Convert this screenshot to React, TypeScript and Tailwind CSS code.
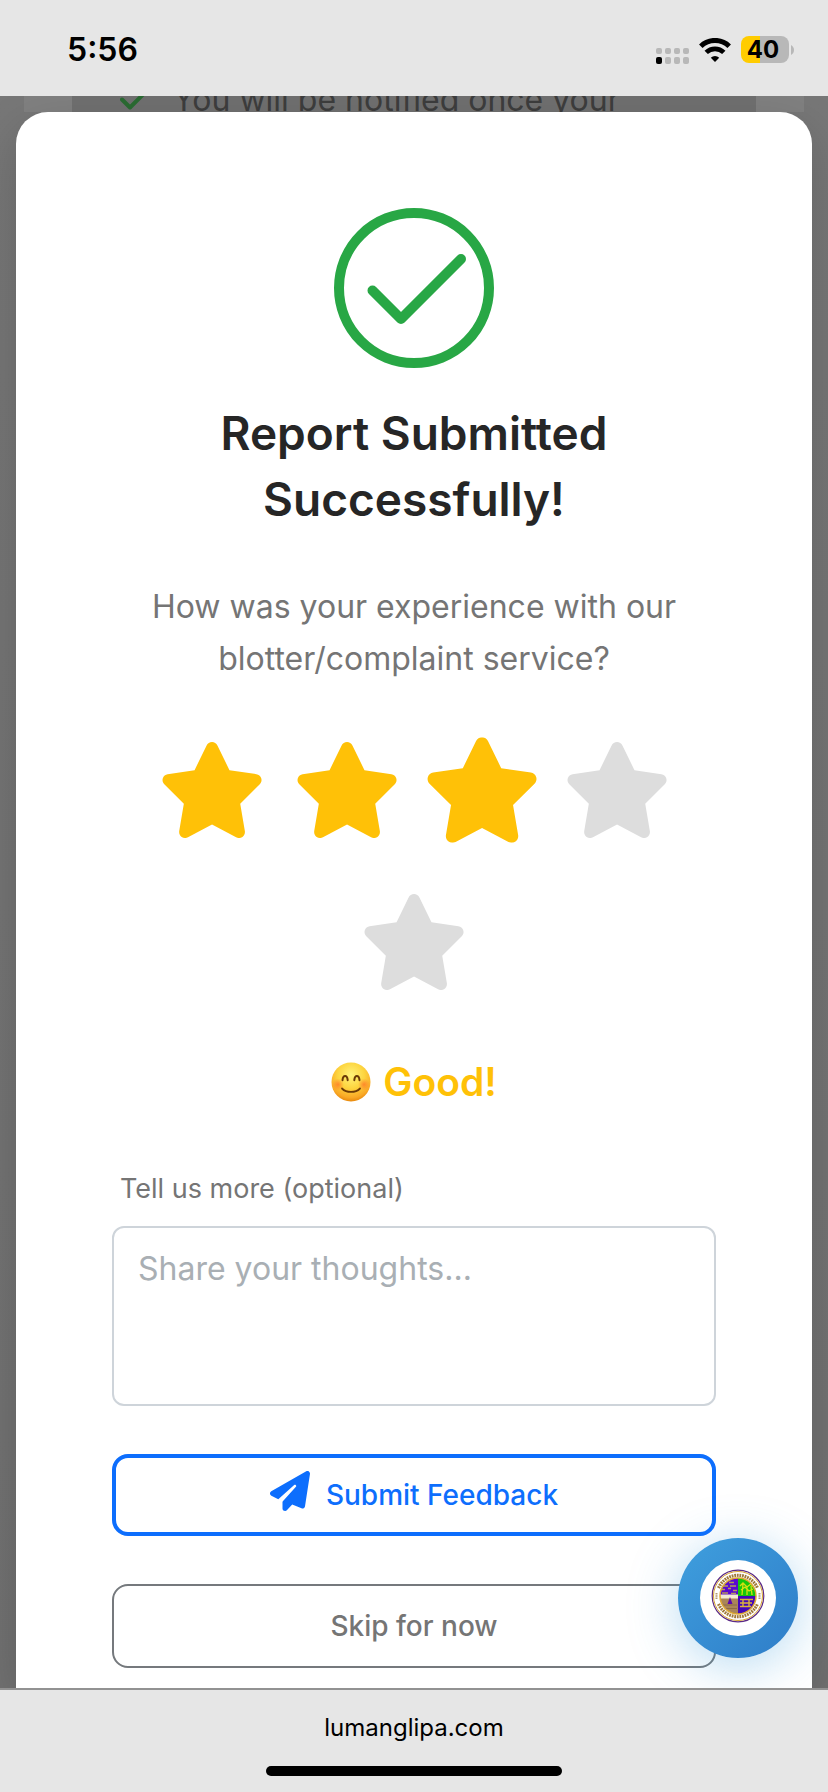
import { useState } from "react";
import { FaPaperPlane, FaStar } from "react-icons/fa6";

const ratings = [
  { value: 1, label: "Poor!" },
  { value: 2, label: "Fair!" },
  { value: 3, label: "Good!" },
  { value: 4, label: "Very good!" },
  { value: 5, label: "Excellent!" },
];

function SignalDots() {
  return (
    <svg width="33" height="16" viewBox="0 0 33 16" aria-hidden="true">
      {[0, 9, 18, 27].map((x) => (
        <g key={x}>
          <rect x={x} y="0" width="6" height="6" rx="2" fill="#b8b8b8" />
          <rect x={x} y="9" width="6" height="7" rx="2" fill={x === 0 ? "#000" : "#b8b8b8"} />
        </g>
      ))}
    </svg>
  );
}

function WifiIcon() {
  return (
    <svg width="32" height="24" viewBox="0 0 32 24" fill="none" stroke="#000" aria-hidden="true">
      <path d="M1.8 8.2a20.3 20.3 0 0 1 28.4 0" strokeWidth="5" />
      <path d="M7.2 14.400a12.6 12.6 0 0 1 17.6 0" strokeWidth="4.8" />
      <path d="M16 24l-4.2-4.3a6 6 0 0 1 8.4 0z" fill="#000" stroke="none" />
    </svg>
  );
}

function Battery() {
  return (
    <div className="flex items-center gap-[2px]">
      <div className="flex h-[27px] w-12 items-center justify-center rounded-lg bg-[linear-gradient(90deg,#ffcc00_40%,#b8b8b8_40%)] pr-1 text-2xl leading-none font-bold">
        40
      </div>
      <svg width="3" height="10" viewBox="0 0 3 10" aria-hidden="true">
        <path d="M0 0c2 1 3 3 3 5s-1 4-3 5z" fill="#b8b8b8" />
      </svg>
    </div>
  );
}

function SmileIcon() {
  return (
    <svg width="40" height="40" viewBox="0 0 40 40" aria-hidden="true">
      <defs>
        <radialGradient id="face" cx="50%" cy="32%" r="68%">
          <stop offset="0" stopColor="#fff27a" />
          <stop offset="0.5" stopColor="#fdd53f" />
          <stop offset="0.85" stopColor="#f9a825" />
          <stop offset="1" stopColor="#e8890c" />
        </radialGradient>
        <radialGradient id="cheek">
          <stop offset="0" stopColor="#ff7426" stopOpacity="0.75" />
          <stop offset="1" stopColor="#ff7426" stopOpacity="0" />
        </radialGradient>
      </defs>
      <circle cx="20" cy="20" r="19.5" fill="url(#face)" />
      <circle cx="7" cy="22.5" r="6" fill="url(#cheek)" />
      <circle cx="33" cy="22.5" r="6" fill="url(#cheek)" />
      <g fill="none" stroke="#6b3a06" strokeLinecap="round">
        <path d="M11.5 18.2c.6-5.6 4.6-5.6 5.2 0M23.3 18.2c.6-5.6 4.6-5.6 5.2 0" strokeWidth="2" />
        <path d="M11 26.5c4.5 4.6 13.5 4.6 18 0" strokeWidth="1.8" />
      </g>
    </svg>
  );
}

function Seal() {
  return (
    <svg width="54" height="54" viewBox="0 0 54 54" aria-hidden="true">
      <defs>
        <clipPath id="sealCore">
          <circle cx="27" cy="27" r="18" />
        </clipPath>
      </defs>
      <circle cx="27" cy="27" r="25.8" fill="#fff" stroke="#5b2a86" strokeWidth="1.2" />
      <circle cx="27" cy="27" r="24.5" fill="none" stroke="#d9a531" strokeWidth="1" />
      <path d="M7.5 19a21.3 21.3 0 0 1 39 0" fill="none" stroke="#a07a3c" strokeWidth="3.2" strokeDasharray="1.8 0.8" />
      <path d="M7.5 35a21.3 21.3 0 0 0 39 0" fill="none" stroke="#a07a3c" strokeWidth="3.2" strokeDasharray="1.8 0.8" />
      <path d="M5.5 24v6M48.5 24v6" stroke="#b39a70" strokeWidth="2" strokeDasharray="1.5 0.7" />
      <g clipPath="url(#sealCore)">
        <path d="M9 9h18v18H9z" fill="#5a08d0" />
        <path d="M27 9h18v18H27z" fill="#16c60c" />
        <path d="M9 27h18v18H9z" fill="#a98558" />
        <path d="M27 27h18v18H27z" fill="#4307b8" />
        <path d="M9 25.500h18v4H9z" fill="#f4ead2" />
        <path d="M12 17h5m2 0h6M10 20.5h4m3-1h3m2 2h4M11 24h6m3 .5h5M18 13.5h5" stroke="#b59a5a" strokeWidth="1.3" />
        <path d="M31 26l1-11M36 26v-9M41 26l-1-9M29 17l3-3 4 4 4-3 4 5M30 21l4-3 4 4 4-2" stroke="#d8e010" strokeWidth="1.3" fill="none" />
        <path d="M16.5 35l2.5-7 2.5 7z" fill="#5a08b0" />
        <path d="M10 36h16M11 39.5h15" stroke="#8b6a45" />
        <path d="M29 30.5h13M29 37.5h11M32 30.5v7M38 30.5v7M29 34h12" stroke="#dcb43a" strokeWidth="1.4" />
      </g>
      <circle cx="27" cy="27" r="18" fill="none" stroke="#dca832" strokeWidth="1.5" />
    </svg>
  );
}

export default function App() {
  const [rating, setRating] = useState(3);
  const current = ratings[rating - 1];

  return (
    <div className="flex min-h-screen flex-col bg-[#e6e6e6] font-['Inter',sans-serif] text-black">
      <header className="flex h-24 items-center justify-between pr-[34px] pl-[67px]">
        <time className="pt-1 text-[32px] leading-10 font-semibold">5:56</time>
        <div className="flex items-center gap-[10px] pt-[3px]">
          <div className="pt-3">
            <SignalDots />
          </div>
          <WifiIcon />
          <Battery />
        </div>
      </header>

      <main className="relative flex flex-1 flex-col overflow-hidden bg-linear-to-b from-[#777777] to-[#717171] px-4 pt-4">
        <div aria-hidden="true" className="absolute inset-x-6 top-0 h-4 overflow-hidden bg-[#808080] px-12">
          <div className="flex h-4 items-end gap-[28px] bg-[#707070] pl-12 text-[#3d3d3d]">
            <svg width="25" height="16" viewBox="0 0 25 16" className="shrink-0">
              <path d="M2 3.5l8 8L23-1.5" fill="none" stroke="#2a6b32" strokeWidth="4" strokeLinecap="round" strokeLinejoin="round" />
            </svg>
            <span className="text-[32px] leading-[24px] whitespace-nowrap">You will be notified once your</span>
          </div>
        </div>

        <section
          role="dialog"
          aria-labelledby="dialog-title"
          className="relative flex flex-1 flex-col items-center rounded-t-[32px] bg-white px-24 pt-24 pb-5 text-center shadow-[0_16px_48px_rgba(0,0,0,0.17)]"
        >
          <svg width="160" height="160" viewBox="0 0 160 160" fill="none" stroke="#28a745" strokeWidth="10" aria-hidden="true">
            <circle cx="80" cy="80" r="75" />
            <path d="M38.5 82.5L67 111L127 51" strokeLinecap="round" strokeLinejoin="round" />
          </svg>

          <h1 id="dialog-title" className="mt-8 max-w-[460px] text-[46px] leading-[66px] font-semibold text-[#262626]">
            Report Submitted Successfully!
          </h1>

          <p className="mt-[49px] max-w-[560px] text-[32px] leading-[52px] text-[#757575]">
            How was your experience with our blotter/complaint service?
          </p>

          <div role="group" aria-label="Rating" className="mt-[57px] flex w-full flex-wrap justify-center gap-x-[27px] gap-y-14">
            {ratings.map(({ value }) => (
              <button
                key={value}
                type="button"
                aria-label={`${value} stars`}
                aria-pressed={value === rating}
                onClick={() => setRating(value)}
                className={`${value <= rating ? "text-[#ffc107]" : "text-[#dddddd]"} ${value === rating ? "scale-110" : ""}`}
              >
                <FaStar className="h-24 w-[108px]" />
              </button>
            ))}
          </div>

          <p className="mt-[68px] flex items-center gap-3 text-[39px] leading-[48px] font-semibold text-[#ffc107]">
            <SmileIcon />
            {current.label}
          </p>

          <label htmlFor="comments" className="mt-[62px] self-start pl-2 text-[27px] leading-[42px] text-[#757575]">
            Tell us more (optional)
          </label>
          <textarea
            id="comments"
            placeholder="Share your thoughts..."
            className="mt-4 block h-[180px] w-full resize-none rounded-xl border-2 border-[#ced4da] px-6 py-[17px] text-[32px] leading-[48px] outline-none placeholder:text-[#a9afb4]"
          />

          <button
            type="button"
            className="mt-12 flex h-[82px] w-full items-center justify-center gap-4 rounded-[16px] border-4 border-[#0d6efd] text-[28px] font-medium text-[#0d6efd]"
          >
            <FaPaperPlane className="mb-2 size-10" />
            Submit Feedback
          </button>
          <button
            type="button"
            className="mt-12 h-[84px] w-full rounded-[16px] border-2 border-[#75797d] text-[28px] font-medium text-[#757575]"
          >
            Skip for now
          </button>
        </section>

        <button
          type="button"
          aria-label="Open assistant"
          className="absolute right-[30px] bottom-[30px] flex size-[120px] items-center justify-center rounded-full bg-linear-to-br from-[#3f9fde] to-[#2f7dc8] shadow-[0_8px_50px_rgba(52,152,219,0.35)]"
        >
          <span className="flex size-[76px] items-center justify-center rounded-full bg-white pb-1">
            <Seal />
          </span>
        </button>
      </main>

      <footer className="flex h-[104px] flex-col items-center justify-between border-t-2 border-[#929292] pt-[22px] pb-4">
        <a href="https://lumanglipa.com" className="text-2xl leading-8">
          lumanglipa.com
        </a>
        <div className="h-[10px] w-[296px] rounded-full bg-black" />
      </footer>
    </div>
  );
}
